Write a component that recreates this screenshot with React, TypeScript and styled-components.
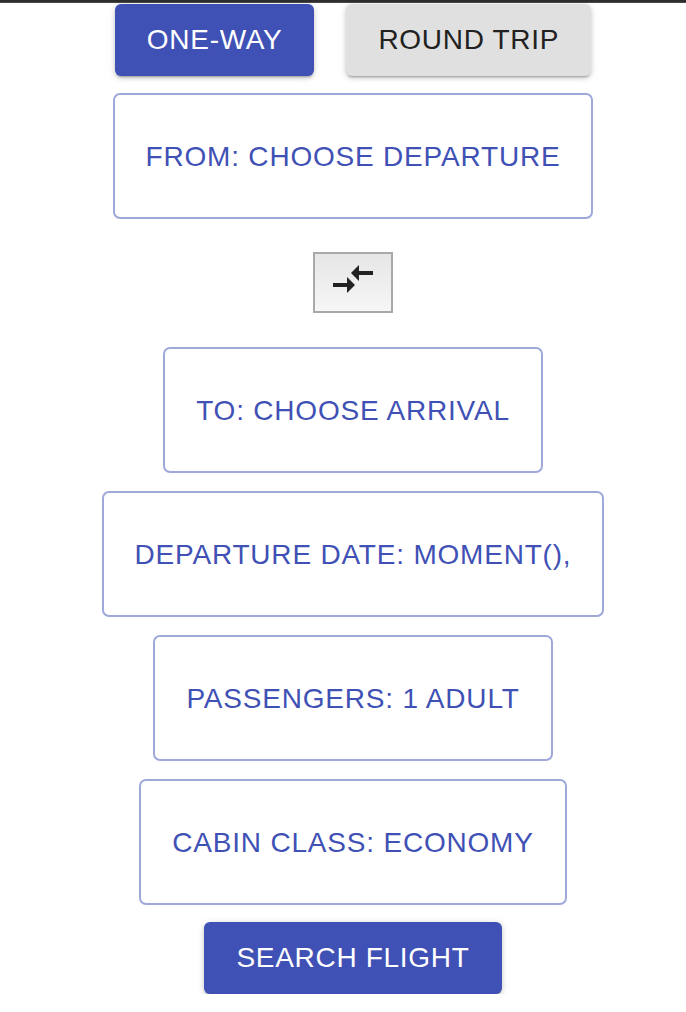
import React from "react";
import styled, { createGlobalStyle } from "styled-components";

const GlobalStyle = createGlobalStyle`
  html, body { margin: 0; padding: 0; background: #ffffff; }
  body { font-family: "Liberation Sans", Arial, sans-serif; }
  * { box-sizing: border-box; }
`;

const TopBar = styled.div`
  height: 3px;
  background: #2e2e2e;
  border-bottom: 1px solid #4a4a4a;
`;

const Page = styled.main`
  display: flex;
  flex-direction: column;
  align-items: center;
  padding: 1px 0 0 20px;
  width: 686px;
`;

const TripRow = styled.div`
  display: flex;
  gap: 32px;
`;

const Contained = styled.button<{ $variant: "primary" | "grey" }>`
  height: 72px;
  padding: 0 32px;
  border: none;
  border-radius: 6px;
  font-family: "Liberation Sans", Arial, sans-serif;
  font-size: 28px;
  letter-spacing: 0.7px;
  text-transform: uppercase;
  cursor: pointer;
  background: ${(p) => (p.$variant === "primary" ? "#3f51b5" : "#e0e0e0")};
  color: ${(p) => (p.$variant === "primary" ? "#ffffff" : "#212121")};
  box-shadow: 0 3px 2px -2px rgba(0, 0, 0, 0.25), 0 2px 4px 0 rgba(0, 0, 0, 0.16),
    0 1px 8px 0 rgba(0, 0, 0, 0.1);
`;

const OutlineBox = styled.button<{ $mt: number }>`
  margin-top: ${(p) => p.$mt}px;
  height: 126px;
  padding: 1px 31px 0;
  background: #ffffff;
  border: 2px solid #9fa8da;
  border-radius: 7px;
  color: #3f51b5;
  font-family: "Liberation Sans", Arial, sans-serif;
  font-size: 28px;
  letter-spacing: 0.8px;
  text-transform: uppercase;
  white-space: nowrap;
  cursor: pointer;
`;

const SwapButton = styled.button`
  margin-top: 33px;
  width: 80px;
  height: 61px;
  display: flex;
  align-items: flex-start;
  justify-content: center;
  padding: 1px 0 0;
  border: 2px solid #a9a9a9;
  background: linear-gradient(#e6e6e6, #f6f6f6);
  cursor: pointer;
`;

const SearchButton = styled(Contained)`
  margin-top: 17px;
`;

const CompareArrows = () => (
  <svg width="48" height="48" viewBox="0 0 24 24" aria-hidden="true">
    <path
      fill="#222222"
      d="M9.01 14H2v2h7.01v3L13 15l-3.99-4v3zm5.98-1v-3H22V8h-7.01V5L11 9l3.99 4z"
    />
  </svg>
);

export default function App() {
  return (
    <>
      <GlobalStyle />
      <TopBar />
      <Page>
        <TripRow>
          <Contained $variant="primary">One-way</Contained>
          <Contained $variant="grey">Round trip</Contained>
        </TripRow>
        <OutlineBox $mt={17}>From: Choose Departure</OutlineBox>
        <SwapButton aria-label="swap">
          <CompareArrows />
        </SwapButton>
        <OutlineBox $mt={34}>To: Choose Arrival</OutlineBox>
        <OutlineBox $mt={18}>Departure date: moment(),</OutlineBox>
        <OutlineBox $mt={18}>Passengers: 1 adult</OutlineBox>
        <OutlineBox $mt={18}>Cabin class: economy</OutlineBox>
        <SearchButton $variant="primary">Search flight</SearchButton>
      </Page>
    </>
  );
}
